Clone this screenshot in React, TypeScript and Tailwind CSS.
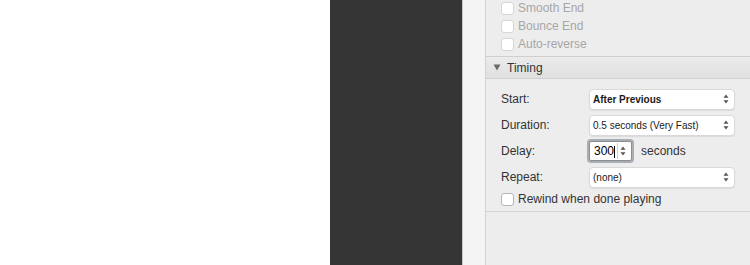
import React from 'react';

function Checkbox({ label, disabled }: { label: string; disabled?: boolean }) {
  return (
    <div className="flex items-center h-[18px]">
      <div
        className={
          'w-[13px] h-[13px] rounded-[3px] border bg-white ' +
          (disabled ? 'border-[#d6d6d6]' : 'border-[#b5b5b5]')
        }
      />
      <span className={'ml-[4px] text-[12px] ' + (disabled ? 'text-[#a6a6a6]' : 'text-[#333]')}>
        {label}
      </span>
    </div>
  );
}

function Stepper({ className }: { className?: string }) {
  return (
    <svg width="6" height="10" viewBox="0 0 6 10" className={className}>
      <path d="M3 0.5 L5.5 3.8 H0.5 Z" fill="#555" />
      <path d="M3 9.5 L5.5 6.2 H0.5 Z" fill="#555" />
    </svg>
  );
}

function Select({ value, bold }: { value: string; bold?: boolean }) {
  return (
    <div className="w-[146px] h-[21px] rounded-[4px] bg-white border border-[#d9d9d9] shadow-[0_1px_1px_rgba(0,0,0,0.08)] flex items-center pl-[3px] pr-[5px]">
      <span className={'flex-1 text-[10px] text-[#1a1a1a] ' + (bold ? 'font-bold' : 'font-normal')}>{value}</span>
      <Stepper />
    </div>
  );
}

function Row({ label, children }: { label: string; children: React.ReactNode }) {
  return (
    <div className="flex items-center h-[26px]">
      <span className="w-[88px] text-[12px] text-[#333]">{label}</span>
      {children}
    </div>
  );
}

export default function App() {
  return (
    <div className="flex w-[750px] h-[265px] overflow-hidden font-['Liberation_Sans',Arial,sans-serif]">
      <div className="w-[330px] bg-white" />
      <div className="w-[132px] bg-[#353535]" />
      <div className="w-[23px] bg-[#f4f4f4] border-l border-[#c8c8c8]" />
      <div className="flex-1 bg-[#ededed] border-l border-[#d2d2d2] flex flex-col">
        <div className="pl-[15px] flex flex-col h-[56px]">
          <div className="mt-[-1px]">
            <Checkbox label="Smooth End" disabled />
          </div>
          <Checkbox label="Bounce End" disabled />
          <Checkbox label="Auto-reverse" disabled />
        </div>
        <div className="h-[23px] border-t border-b border-[#cfcfcf] bg-gradient-to-b from-[#ebebeb] to-[#e0e0e0] flex items-center pl-[7px]">
          <svg width="8" height="7" viewBox="0 0 8 7">
            <path d="M0.5 0.5 H7.5 L4 6.5 Z" fill="#6b6b6b" />
          </svg>
          <span className="ml-[6px] text-[12px] text-[#333]">Timing</span>
        </div>
        <div className="pl-[15px] pt-[7px] flex flex-col">
          <Row label="Start:">
            <Select value="After Previous" bold />
          </Row>
          <Row label="Duration:">
            <Select value="0.5 seconds (Very Fast)" />
          </Row>
          <Row label="Delay:">
            <div className="ml-[-2px] w-[47px] h-[24px] rounded-[4px] bg-[#a9aeb5] p-[2px]">
              <div className="h-full rounded-[2px] bg-white border border-[#8e8e8e] flex items-center pl-[4px] pr-[3px]">
                <span className="flex-1 text-[12px] text-black">
                  300<span className="inline-block w-px h-[12px] bg-black align-middle" />
                </span>
                <div className="h-[16px] w-[11px] border-l border-[#d0d0d0] flex items-center justify-center">
                  <Stepper />
                </div>
              </div>
            </div>
            <span className="ml-[7px] text-[12px] text-[#333]">seconds</span>
          </Row>
          <Row label="Repeat:">
            <Select value="(none)" />
          </Row>
          <Checkbox label="Rewind when done playing" />
        </div>
        <div className="mt-[3px] border-t border-[#d4d4d4]" />
      </div>
    </div>
  );
}
